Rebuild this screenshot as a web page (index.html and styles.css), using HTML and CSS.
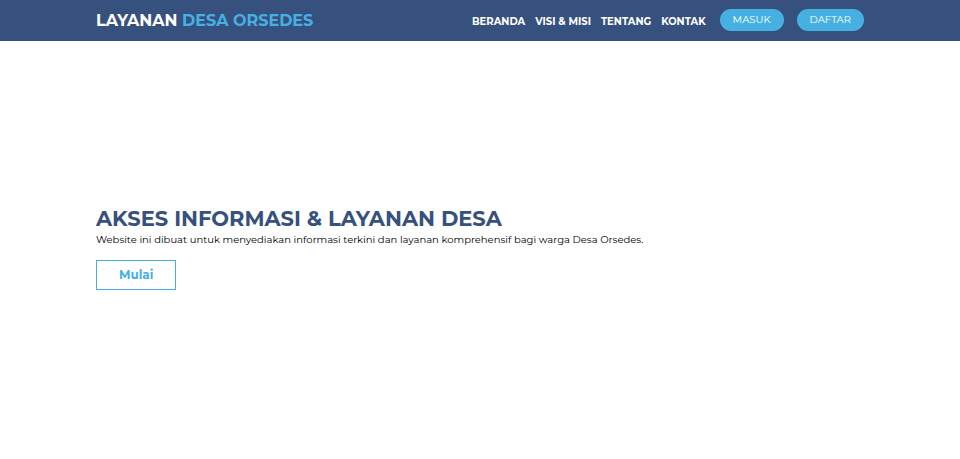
FILE: index.html
```html
<!DOCTYPE html>
<html lang="id">
<head>
<meta charset="utf-8">
<meta name="viewport" content="width=device-width, initial-scale=1">
<title>Layanan Desa Orsedes</title>
<link rel="stylesheet" href="styles.css">
</head>
<body>
<header class="navbar">
  <div class="container navbar-inner">
    <a class="brand" href="#">LAYANAN <span class="brand-accent">DESA ORSEDES</span></a>
    <div class="navbar-end">
      <nav class="menu">
        <a href="#">BERANDA</a>
        <a href="#">VISI &amp; MISI</a>
        <a href="#">TENTANG</a>
        <a href="#">KONTAK</a>
      </nav>
      <div class="actions">
        <button class="pill" type="button">MASUK</button>
        <button class="pill" type="button">DAFTAR</button>
      </div>
    </div>
  </div>
</header>
<main class="container hero">
  <h1>AKSES INFORMASI &amp; LAYANAN DESA</h1>
  <p>Website ini dibuat untuk menyediakan informasi terkini dan layanan komprehensif bagi warga Desa Orsedes.</p>
  <button class="start" type="button">Mulai</button>
</main>
</body>
</html>
```

FILE: styles.css
```css
* {
  box-sizing: border-box;
}

body {
  display: flex;
  flex-direction: column;
  min-height: 100vh;
  margin: 0;
  background: #fff;
  color: #000;
  font-family: Montserrat, Inter, sans-serif;
}

button {
  font-family: inherit;
  cursor: pointer;
}

a {
  color: inherit;
  text-decoration: none;
}

.container {
  width: 80%;
  margin: 0 auto;
}

.navbar {
  background: #36517e;
  color: #fff;
}

.navbar-inner {
  display: flex;
  align-items: center;
  justify-content: space-between;
  padding: 9px 0 10px;
}

.brand {
  padding-top: 2px;
  font-size: 16px;
  line-height: 20px;
  font-weight: 700;
}

.brand-accent {
  color: #47b0e3;
}

.navbar-end,
.menu,
.actions {
  display: flex;
  align-items: center;
}

.navbar-end {
  gap: 14px;
}

.menu {
  gap: 10px;
  padding-top: 2px;
  font-size: 10px;
  font-weight: 700;
}

.actions {
  gap: 13px;
}

.pill {
  padding: 0 13px;
  border: 0;
  border-radius: 12px;
  background: #47b0e3;
  color: #fff;
  font-size: 10px;
  line-height: 22px;
}

.hero {
  flex: 1;
  display: flex;
  flex-direction: column;
  align-items: flex-start;
  justify-content: center;
  padding-bottom: 4px;
}

.hero h1 {
  margin: 0;
  color: #36517e;
  font-size: 21px;
  font-weight: 700;
  line-height: 26px;
}

.hero p {
  margin: 0 0 12px;
  font-size: 10px;
  line-height: 16px;
}

.start {
  padding: 0 22px;
  border: 1px solid #47b0e3;
  background: #fff;
  color: #47b0e3;
  font-size: 12px;
  font-weight: 700;
  line-height: 28px;
}
```
